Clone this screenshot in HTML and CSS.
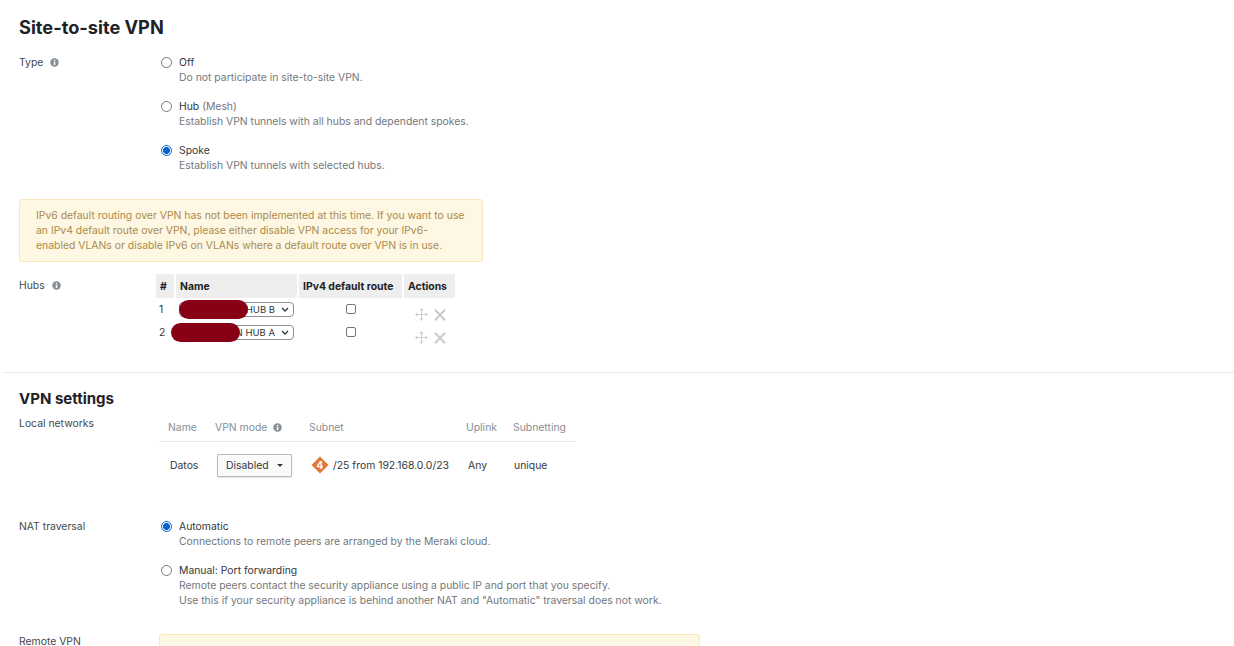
FILE: index.html
```html
<!DOCTYPE html>
<html>
	<head>
		<meta charset="utf-8">
		<title>Site-to-site VPN</title>
		<link rel="stylesheet" href="styles.css">
	</head>
	<body>
		<section class="top">
			<h1>Site-to-site VPN</h1>
			<div class="row type-row">
				<div class="label">Type <svg class="info" viewBox="0 0 10 10"><use href="#info"/></svg></div>
				<div class="options">
					<div class="option">
						<span class="radio"></span>
						<div>
							<div class="opt-title">Off</div>
							<div class="opt-desc">Do not participate in site-to-site VPN.</div>
						</div>
					</div>
					<div class="option">
						<span class="radio"></span>
						<div>
							<div class="opt-title">Hub <span class="muted">(Mesh)</span></div>
							<div class="opt-desc">Establish VPN tunnels with all hubs and dependent spokes.</div>
						</div>
					</div>
					<div class="option">
						<span class="radio on"></span>
						<div>
							<div class="opt-title">Spoke</div>
							<div class="opt-desc">Establish VPN tunnels with selected hubs.</div>
						</div>
					</div>
				</div>
			</div>
			<div class="notice ipv6">IPv6 default routing over VPN has not been implemented at this time. If you want to use an IPv4 default route over VPN, please either disable VPN access for your IPv6-enabled VLANs or disable IPv6 on VLANs where a default route over VPN is in use.</div>
			<div class="row hubs-row">
				<div class="label hubs-label">Hubs <svg class="info" viewBox="0 0 10 10"><use href="#info"/></svg></div>
				<table class="hubs">
					<thead>
						<tr>
							<th class="c-num">#</th>
							<th class="c-name">Name</th>
							<th class="c-route">IPv4 default route</th>
							<th class="c-act">Actions</th>
						</tr>
					</thead>
					<tbody>
						<tr>
							<td>1</td>
							<td class="name-cell">
								<span class="hub-select">HUB B<svg class="chev" viewBox="0 0 8 5"><path d="M1 1l3 3 3-3"/></svg></span>
								<span class="redact r1"></span>
							</td>
							<td class="check-cell"><span class="check"></span></td>
							<td class="act-cell">
								<svg class="move" viewBox="0 0 14 14"><use href="#move"/></svg>
								<svg class="del" viewBox="0 0 12 12"><use href="#del"/></svg>
							</td>
						</tr>
						<tr>
							<td>2</td>
							<td class="name-cell">
								<span class="hub-select">N HUB A<svg class="chev" viewBox="0 0 8 5"><path d="M1 1l3 3 3-3"/></svg></span>
								<span class="redact r2"></span>
							</td>
							<td class="check-cell"><span class="check"></span></td>
							<td class="act-cell">
								<svg class="move" viewBox="0 0 14 14"><use href="#move"/></svg>
								<svg class="del" viewBox="0 0 12 12"><use href="#del"/></svg>
							</td>
						</tr>
					</tbody>
				</table>
			</div>
		</section>

		<section class="settings">
			<h2>VPN settings</h2>
			<div class="row nets-row">
				<div class="label">Local networks</div>
				<table class="nets">
					<thead>
						<tr>
							<th class="n-name">Name</th>
							<th class="n-mode">VPN mode <svg class="info" viewBox="0 0 10 10"><use href="#info"/></svg></th>
							<th class="n-subnet">Subnet</th>
							<th class="n-uplink">Uplink</th>
							<th class="n-sub">Subnetting</th>
						</tr>
					</thead>
					<tbody>
						<tr>
							<td class="n-name">Datos</td>
							<td class="n-mode"><span class="dropdown">Disabled<i class="caret"></i></span></td>
							<td class="n-subnet">
								<span class="subnet">
									<svg class="diamond" viewBox="0 0 18 18"><path d="M9 .5L17.5 9 9 17.5.5 9z" fill="#e2793a"/><text x="9" y="12.6" text-anchor="middle">4</text></svg>
									/25 from 192.168.0.0/23
								</span>
							</td>
							<td class="n-uplink">Any</td>
							<td class="n-sub">unique</td>
						</tr>
					</tbody>
				</table>
			</div>
			<div class="row nat-row">
				<div class="label">NAT traversal</div>
				<div class="options">
					<div class="option">
						<span class="radio on"></span>
						<div>
							<div class="opt-title">Automatic</div>
							<div class="opt-desc">Connections to remote peers are arranged by the Meraki cloud.</div>
						</div>
					</div>
					<div class="option">
						<span class="radio"></span>
						<div>
							<div class="opt-title">Manual: Port forwarding</div>
							<div class="opt-desc">Remote peers contact the security appliance using a public IP and port that you specify.</div>
							<div class="opt-desc">Use this if your security appliance is behind another NAT and "Automatic" traversal does not work.</div>
						</div>
					</div>
				</div>
			</div>
			<div class="row remote-row">
				<div class="label">Remote VPN</div>
				<div class="notice remote"></div>
			</div>
		</section>

		<svg class="defs" width="0" height="0">
			<symbol id="info" viewBox="0 0 10 10">
				<circle cx="5" cy="5" r="4.7" fill="#868e94"/>
				<rect x="4.2" y="4.2" width="1.7" height="3.6" fill="#fff"/>
				<rect x="4.2" y="2.1" width="1.7" height="1.4" fill="#fff"/>
			</symbol>
			<symbol id="move" viewBox="0 0 14 14">
				<path d="M7 1v12M1 7h12" fill="none" stroke="#c9cccf" stroke-width="1"/>
				<path d="M7 0l2.2 2.6H4.8zM7 14l2.2-2.6H4.8zM0 7l2.6-2.2v4.4zM14 7l-2.6-2.2v4.4z" fill="#c9cccf"/>
			</symbol>
			<symbol id="del" viewBox="0 0 12 12">
				<path d="M1 .8l10 10.4M11 .8L1 11.2" fill="none" stroke="#c9cccf" stroke-width="2.2"/>
			</symbol>
		</svg>
	</body>
</html>
```

FILE: styles.css
```css
html, body {
	height: 646px;
	overflow: hidden;
}
body {
	margin: 0;
	background-color: #fff;
	font-family: "Inter", "Liberation Sans", sans-serif;
	font-size: 10.4px;
	line-height: 15px;
	color: #45494d;
}
h1 {
	margin: 0;
	padding-top: 16px;
	font-size: 18.2px;
	line-height: 22px;
	font-weight: 700;
	color: #1e2226;
}
h2 {
	margin: 0;
	font-size: 15px;
	line-height: 18px;
	font-weight: 700;
	color: #1e2226;
}
.top {
	padding: 0 0 0 19px;
	height: 372px;
	box-sizing: border-box;
}
.settings {
	margin-left: 3px;
	padding: 17px 0 0 16px;
	border-top: 1px solid #e6e8e9;
}
.row {
	display: flex;
}
.label {
	width: 140px;
	flex: none;
}
.info {
	width: 9px;
	height: 9px;
	margin-left: 4px;
	vertical-align: -1px;
}
.defs {
	position: absolute;
}
.type-row {
	margin-top: 17px;
}
.options {
	display: flex;
	flex-direction: column;
	gap: 14px;
}
.option {
	display: flex;
	gap: 7px;
	padding-left: 2px;
}
.radio {
	flex: none;
	box-sizing: border-box;
	width: 11px;
	height: 11px;
	margin-top: 2px;
	border: 1px solid #767676;
	border-radius: 50%;
	background-color: #fff;
}
.radio.on {
	border: 1px solid #0b63d6;
	background: radial-gradient(circle, #0b63d6 0, #0b63d6 3.2px, #fff 3.8px);
}
.opt-title {
	color: #33383c;
}
.opt-desc {
	color: #72777b;
}
.muted {
	color: #72777b;
}
.notice {
	box-sizing: border-box;
	background-color: #fdf7e3;
	border: 1px solid #f8e8bb;
	border-radius: 3px;
	color: #ab8a4c;
}
.ipv6 {
	width: 464px;
	height: 63px;
	margin-top: 26px;
	padding: 8px 17px 8px 16px;
}
.hubs-row {
	margin-top: 12px;
}
.hubs-label {
	width: 137px;
	padding-top: 4px;
}
.hubs {
	border-collapse: separate;
	border-spacing: 2px 0;
	table-layout: fixed;
	width: 303px;
	margin-left: -2px;
	align-self: flex-start;
}
.hubs th {
	height: 24px;
	padding: 0 0 0 4px;
	background-color: #eeeeee;
	text-align: left;
	font-weight: 700;
	color: #1e2226;
}
.c-num {
	width: 14px;
}
.c-name {
	width: 117px;
}
.c-route {
	width: 99px;
}
.c-act {
	width: 47px;
}
.hubs td {
	box-sizing: border-box;
	height: 23px;
	padding: 4px 0 0 3px;
	color: #33383c;
	vertical-align: top;
}
.name-cell {
	position: relative;
}
.hub-select {
	display: flex;
	align-items: center;
	justify-content: flex-end;
	box-sizing: border-box;
	width: 115px;
	height: 15px;
	padding-right: 4px;
	border: 1px solid #8f8f9d;
	border-radius: 4px;
	background-color: #fff;
	font-size: 9.5px;
}
.chev {
	width: 8px;
	height: 5px;
	margin-left: 6px;
	fill: none;
	stroke: #33383c;
	stroke-width: 1.3;
}
.redact {
	position: absolute;
	height: 19px;
	width: 69px;
	border-radius: 10px;
	background-color: #880015;
}
.r1 {
	left: 3px;
	top: 2px;
}
.r2 {
	left: -5px;
	top: 2px;
}
.hubs td.check-cell {
	padding: 6px 0 0 0;
}
.check {
	display: block;
	box-sizing: border-box;
	width: 10px;
	height: 10px;
	margin: 0 auto;
	border: 1px solid #767676;
	border-radius: 2px;
	background-color: #fff;
}
.hubs td.act-cell {
	padding: 10px 0 0 11px;
	white-space: nowrap;
	font-size: 0;
	line-height: 0;
}
.move {
	width: 13px;
	height: 13px;
}
.del {
	width: 12px;
	height: 12px;
	margin-left: 6px;
}
.nets-row {
	margin-top: 8px;
}
.nets {
	border-collapse: collapse;
	table-layout: fixed;
	width: 416px;
	margin-top: -3px;
	align-self: flex-start;
}
.nets th {
	height: 28px;
	padding: 1px 0 0 0;
	box-sizing: border-box;
	text-align: left;
	font-weight: 400;
	color: #868e94;
	border-bottom: 1px solid #e6e8e9;
}
.nets td {
	height: 47px;
	padding: 0;
	color: #33383c;
}
.n-name {
	width: 56px;
}
.nets th.n-name {
	padding-left: 9px;
}
.nets td.n-name {
	padding-left: 11px;
}
.n-mode {
	width: 94px;
}
.nets th .info {
	margin-left: 3px;
}
.n-subnet {
	width: 157px;
}
.n-uplink {
	width: 47px;
}
.dropdown {
	display: inline-flex;
	align-items: center;
	vertical-align: middle;
	box-sizing: border-box;
	width: 75px;
	height: 23px;
	margin-left: 2px;
	padding-left: 8px;
	border: 1px solid #b7babd;
	border-radius: 1px;
	background-color: #fafafa;
	box-shadow: 0 1px 1px #e6e8e9;
}
.caret {
	width: 0;
	height: 0;
	margin-left: 8px;
	border-left: 3px solid transparent;
	border-right: 3px solid transparent;
	border-top: 3px solid #33383c;
}
.subnet {
	display: flex;
	align-items: center;
	gap: 4px;
	margin-left: 2px;
}
.diamond {
	width: 18px;
	height: 18px;
}
.diamond text {
	font-size: 10px;
	font-weight: 700;
	fill: #fff;
}
.nets td.n-uplink {
	padding-left: 2px;
}
.nets td.n-sub {
	padding-left: 1px;
}
.nat-row {
	margin-top: 30px;
}
.remote-row {
	margin-top: 26px;
}
.remote {
	width: 541px;
	height: 30px;
}
```
